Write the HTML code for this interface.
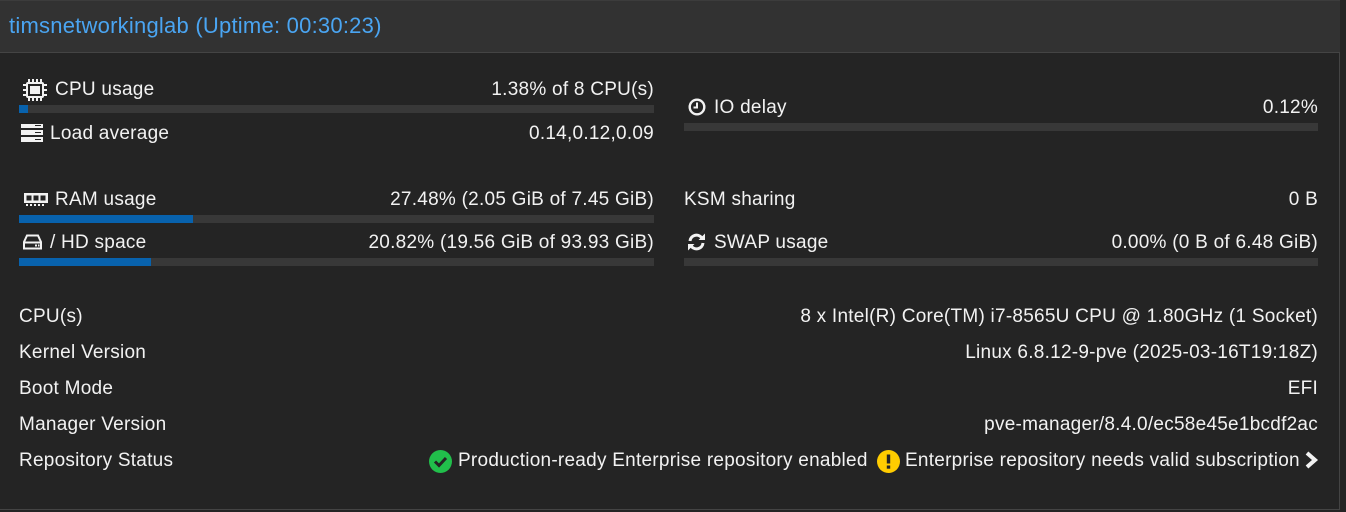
<!DOCTYPE html>
<html><head><meta charset="utf-8"><style>
body{margin:0;width:1346px;height:512px;background:#242424;overflow:hidden;font-family:"Liberation Sans",sans-serif;color:#f2f2f2;font-size:19px;letter-spacing:0.25px;position:relative}
.hdr{position:absolute;left:0;top:0;width:1340px;height:53px;background:#323232;border-top:1px solid #3c3c3c;border-bottom:1px solid #444;box-sizing:border-box}
.hdr span{position:absolute;left:9px;top:12px;font-size:22px;letter-spacing:0.23px;color:#4aa5f2;line-height:26px}
.frame{position:absolute;left:0;top:53px;width:1340px;height:457px;border-right:1px solid #444;border-bottom:1px solid #444;box-sizing:border-box}
.t{position:absolute;line-height:20px;white-space:nowrap;margin-top:1px}
.r{text-align:right}
.bar{position:absolute;height:8px;background:#383838}
.bar i{position:absolute;left:0;top:0;bottom:0;background:#0862ad}
svg{position:absolute}
</style></head><body>
<div class="hdr"><span>timsnetworkinglab (Uptime: 00:30:23)</span></div>
<div class="frame"></div>

<svg style="left:23px;top:79px" width="24" height="22" viewBox="0 0 24 22"><g fill="#f2f2f2"><rect x="3" y="3" width="18" height="16" rx="2"/><rect x="5" y="0" width="2" height="3"/><rect x="9" y="0" width="2" height="3"/><rect x="13" y="0" width="2" height="3"/><rect x="17" y="0" width="2" height="3"/><rect x="5" y="19" width="2" height="3"/><rect x="9" y="19" width="2" height="3"/><rect x="13" y="19" width="2" height="3"/><rect x="17" y="19" width="2" height="3"/><rect x="0" y="5" width="3" height="2"/><rect x="0" y="10" width="3" height="2"/><rect x="0" y="15" width="3" height="2"/><rect x="21" y="5" width="3" height="2"/><rect x="21" y="10" width="3" height="2"/><rect x="21" y="15" width="3" height="2"/></g><rect x="5" y="5" width="14" height="12" fill="#242424"/><rect x="7" y="7" width="10" height="8" fill="#f2f2f2"/></svg>
<div class="t" style="left:55px;top:79px">CPU usage</div>
<div class="t r" style="right:692px;top:79px">1.38% of 8 CPU(s)</div>
<div class="bar" style="left:19px;top:105px;width:635px"><i style="width:9px"></i></div>

<svg style="left:21px;top:124px" width="22" height="18" viewBox="0 0 22 18"><g fill="#f2f2f2"><rect x="0" y="0" width="22" height="4"/><rect x="0" y="6" width="22" height="5"/><rect x="0" y="13" width="22" height="5"/></g><g fill="#242424"><rect x="14" y="1" width="6" height="1"/><rect x="14" y="8" width="6" height="1"/><rect x="14" y="15" width="6" height="1"/></g></svg>
<div class="t" style="left:50px;top:123px">Load average</div>
<div class="t r" style="right:692px;top:123px">0.14,0.12,0.09</div>

<svg style="left:688px;top:98px" width="18" height="18" viewBox="0 0 18 18"><circle cx="9" cy="9" r="7.3" fill="none" stroke="#f2f2f2" stroke-width="2.4"/><path d="M9 4.5V9.5H5.5" fill="none" stroke="#f2f2f2" stroke-width="2"/></svg>
<div class="t" style="left:714px;top:97px">IO delay</div>
<div class="t r" style="right:28px;top:97px">0.12%</div>
<div class="bar" style="left:684px;top:123px;width:634px"></div>

<svg style="left:24px;top:193px" width="24" height="13" viewBox="0 0 24 13"><rect x="0" y="0" width="24" height="10" fill="#f2f2f2"/><rect x="2.5" y="2.5" width="5" height="5" fill="#242424"/><rect x="9.5" y="2.5" width="5" height="5" fill="#242424"/><rect x="16.5" y="2.5" width="5" height="5" fill="#242424"/><g fill="#f2f2f2"><rect x="2" y="11" width="2" height="2"/><rect x="6" y="11" width="2" height="2"/><rect x="10" y="11" width="2" height="2"/><rect x="14" y="11" width="2" height="2"/><rect x="18" y="11" width="2" height="2"/></g></svg>
<div class="t" style="left:55px;top:189px">RAM usage</div>
<div class="t r" style="right:692px;top:189px">27.48% (2.05 GiB of 7.45 GiB)</div>
<div class="bar" style="left:19px;top:215px;width:635px"><i style="width:174px"></i></div>

<svg style="left:23px;top:234px" width="19" height="16" viewBox="0 0 19 16"><path d="M4 1.5H15L18 8V14.5H1V8Z" fill="none" stroke="#f2f2f2" stroke-width="2"/><path d="M1 8.5H18" stroke="#f2f2f2" stroke-width="2"/><rect x="12" y="10.5" width="2" height="2" fill="#f2f2f2"/><rect x="15" y="10.5" width="1.5" height="2" fill="#f2f2f2"/></svg>
<div class="t" style="left:50px;top:232px">/ HD space</div>
<div class="t r" style="right:692px;top:232px">20.82% (19.56 GiB of 93.93 GiB)</div>
<div class="bar" style="left:19px;top:258px;width:635px"><i style="width:132px"></i></div>

<div class="t" style="left:684px;top:189px">KSM sharing</div>
<div class="t r" style="right:28px;top:189px">0 B</div>

<svg style="left:687px;top:233px" width="19" height="18" viewBox="0 0 19 18"><path d="M3 8A6.5 6.5 0 0 1 14.5 4.5" fill="none" stroke="#f2f2f2" stroke-width="3"/><path d="M11.5 7H18V0.5Z" fill="#f2f2f2"/><path d="M16 10A6.5 6.5 0 0 1 4.5 13.5" fill="none" stroke="#f2f2f2" stroke-width="3"/><path d="M7.5 11H1V17.5Z" fill="#f2f2f2"/></svg>
<div class="t" style="left:714px;top:232px">SWAP usage</div>
<div class="t r" style="right:28px;top:232px">0.00% (0 B of 6.48 GiB)</div>
<div class="bar" style="left:684px;top:258px;width:634px"></div>

<div class="t" style="left:19px;top:306px">CPU(s)</div>
<div class="t r" style="right:28px;top:306px">8 x Intel(R) Core(TM) i7-8565U CPU @ 1.80GHz (1 Socket)</div>
<div class="t" style="left:19px;top:342px">Kernel Version</div>
<div class="t r" style="right:28px;top:342px">Linux 6.8.12-9-pve (2025-03-16T19:18Z)</div>
<div class="t" style="left:19px;top:378px">Boot Mode</div>
<div class="t r" style="right:28px;top:378px">EFI</div>
<div class="t" style="left:19px;top:414px">Manager Version</div>
<div class="t r" style="right:28px;top:414px">pve-manager/8.4.0/ec58e45e1bcdf2ac</div>
<div class="t" style="left:19px;top:450px">Repository Status</div>

<svg style="left:429px;top:450px" width="23" height="23" viewBox="0 0 23 23"><circle cx="11.5" cy="11.5" r="11.5" fill="#21bf4b"/><path d="M6 11.5L10 15.5L17 8" fill="none" stroke="#242424" stroke-width="3"/></svg>
<div class="t" style="left:458px;top:450px">Production-ready Enterprise repository enabled</div>
<svg style="left:877px;top:450px" width="23" height="23" viewBox="0 0 23 23"><circle cx="11.5" cy="11.5" r="11.5" fill="#ffcc00"/><rect x="9.8" y="4.5" width="3.4" height="9" fill="#242424"/><rect x="9.8" y="15.5" width="3.4" height="3.2" fill="#242424"/></svg>
<div class="t" style="left:905px;top:450px">Enterprise repository needs valid subscription</div>
<svg style="left:1304px;top:451px" width="15" height="18" viewBox="0 0 15 18"><path d="M3 2L11 9L3 16" fill="none" stroke="#f2f2f2" stroke-width="4"/></svg>
</body></html>
